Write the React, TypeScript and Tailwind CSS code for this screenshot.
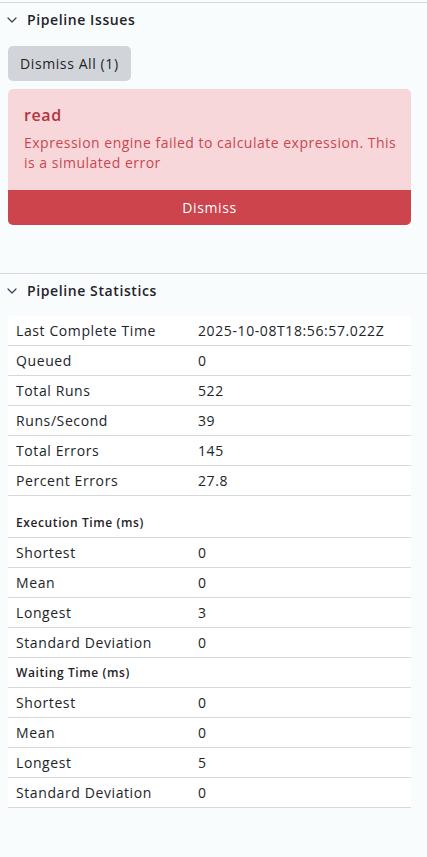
import React from 'react';

type Row = { label: string; value?: string; heading?: boolean; first?: boolean };

const rows: Row[] = [
  { label: 'Last Complete Time', value: '2025-10-08T18:56:57.022Z' },
  { label: 'Queued', value: '0' },
  { label: 'Total Runs', value: '522' },
  { label: 'Runs/Second', value: '39' },
  { label: 'Total Errors', value: '145' },
  { label: 'Percent Errors', value: '27.8' },
  { label: 'Execution Time (ms)', heading: true, first: true },
  { label: 'Shortest', value: '0' },
  { label: 'Mean', value: '0' },
  { label: 'Longest', value: '3' },
  { label: 'Standard Deviation', value: '0' },
  { label: 'Waiting Time (ms)', heading: true },
  { label: 'Shortest', value: '0' },
  { label: 'Mean', value: '0' },
  { label: 'Longest', value: '5' },
  { label: 'Standard Deviation', value: '0' },
];

function Chevron() {
  return (
    <svg width="12" height="12" viewBox="0 0 12 12" fill="none" stroke="#374151" strokeWidth="1.2" strokeLinecap="round" strokeLinejoin="round">
      <path d="M2 4l4 4 4-4" />
    </svg>
  );
}

function SectionHeader({ title }: { title: string }) {
  return (
    <div className="flex items-center gap-[9px] pl-[6px] h-[33px]">
      <Chevron />
      <span className="text-[14px] font-semibold text-[#1f2328]">{title}</span>
    </div>
  );
}

export default function App() {
  return (
    <div className="min-h-[857px] bg-[#f9fcfc] text-[#212529] tracking-[0.6px]" style={{ fontFamily: '"Open Sans", "Noto Sans", sans-serif' }}>
      <div className="h-[2px]" />
      <div className="border-t border-[#d5d9de]">
        <SectionHeader title="Pipeline Issues" />
        <div className="px-2 pt-[10px]">
          <button className="bg-[#d1d5da] rounded-[5px] px-[12px] h-[35px] text-[14px] text-[#1f2328]">Dismiss All (1)</button>
          <div className="mt-[8px] w-[403px] bg-[#f8d7da] rounded-[5px] overflow-hidden">
            <div className="pl-4 pr-[2px] pt-[15px] pb-[17px]">
              <div className="text-[16px] font-semibold text-[#b3343e] leading-[22px]">read</div>
              <div className="mt-[7px] text-[14px] leading-[20px] tracking-[0.5px] text-[#c94651]">
                Expression engine failed to calculate expression. This is a simulated error
              </div>
            </div>
            <button className="w-full h-[35px] bg-[#cc444c] text-white text-[14px]">Dismiss</button>
          </div>
        </div>
      </div>
      <div className="mt-[48px] border-t border-[#d5d9de]">
        <SectionHeader title="Pipeline Statistics" />
        <div className="px-2 pt-[9px]">
          <div className="w-[403px] bg-white">
            {rows.map((r, i) =>
              r.heading ? (
                <div key={i} className={`${r.first ? 'h-[42px] pt-3' : 'h-[30px]'} flex items-center pl-2 border-b border-[#d5d9de] text-[12px] font-semibold text-[#1f2328]`}>
                  {r.label}
                </div>
              ) : (
                <div key={i} className="h-[30px] flex items-center border-b border-[#d5d9de] text-[14px] text-[#212529]">
                  <div className="w-[190px] pl-2">{r.label}</div>
                  <div>{r.value}</div>
                </div>
              )
            )}
          </div>
        </div>
      </div>
    </div>
  );
}
